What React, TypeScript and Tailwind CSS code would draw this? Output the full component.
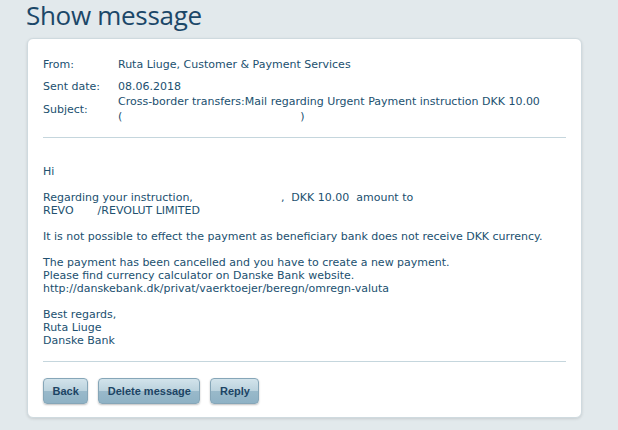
import React from "react";

const Field = ({ label, children, className }: { label: string; children: React.ReactNode; className?: string }) => (
  <div className={`flex items-center ${className ?? ""}`}>
    <div className="w-[75px] shrink-0">{label}</div>
    <div>{children}</div>
  </div>
);

const Button = ({ label }: { label: string }) => (
  <button className="h-[26px] px-[8.5px] rounded-[4px] border border-[#86a6b8] bg-[linear-gradient(to_bottom,#d2e3eb_0%,#bcd3de_48%,#99b9ca_52%,#8fb2c5_100%)] shadow-[0_1px_2px_rgba(0,0,0,0.25)] text-[11px] font-bold text-[#1c4464] font-['Liberation_Sans',Arial,sans-serif]">
    {label}
  </button>
);

const App = () => {
  return (
    <div className="w-[618px] h-[430px] overflow-hidden bg-[#e2e9ec] font-['DejaVu_Sans',Verdana,sans-serif] text-[11px] text-[#21506f]">
      <h1 className="pl-[26px] pt-[2px] h-[38px] text-[26px] leading-[26px] text-[#1b4768] font-['Open_Sans',sans-serif] tracking-[-0.3px]">
        Show message
      </h1>
      <div className="ml-[27px] w-[555px] bg-white rounded-[6px] border border-[#cfdadf] shadow-[0_1px_3px_rgba(0,0,0,0.12)] px-[15px] pt-[18px] pb-[13px]">
        <div className="leading-[16px]">
          <Field label="From:">Ruta Liuge, Customer &amp; Payment Services</Field>
          <Field label="Sent date:" className="mt-[6px]">08.06.2018</Field>
          <Field label="Subject:" className="leading-[15px] -mt-[1px]">
            <div>Cross-border transfers:Mail regarding Urgent Payment instruction DKK 10.00</div>
            <div>
              (<span className="inline-block w-[178px]"></span>)
            </div>
          </Field>
        </div>
        <div className="mt-[13px] border-t border-[#c5d6dd]"></div>
        <div className="mt-[27px] leading-[13px]">
          <p>Hi</p>
          <p className="mt-[13px]">
            Regarding your instruction,<span className="inline-block w-[88px]"></span>,&nbsp; DKK 10.00&nbsp; amount to
          </p>
          <p>
            REVO<span className="inline-block w-[24px]"></span>/REVOLUT LIMITED
          </p>
          <p className="mt-[13px]">
            It is not possible to effect the payment as beneficiary bank does not receive DKK currency.
          </p>
          <p className="mt-[13px]">The payment has been cancelled and you have to create a new payment.</p>
          <p>Please find currency calculator on Danske Bank website.</p>
          <p>http://danskebank.dk/privat/vaerktoejer/beregn/omregn-valuta</p>
          <p className="mt-[13px]">Best regards,</p>
          <p>Ruta Liuge</p>
          <p>Danske Bank</p>
        </div>
        <div className="mt-[14px] border-t border-[#c5d6dd]"></div>
        <div className="mt-[16px] flex gap-[10px]">
          <Button label="Back" />
          <Button label="Delete message" />
          <Button label="Reply" />
        </div>
      </div>
    </div>
  );
};

export default App;
